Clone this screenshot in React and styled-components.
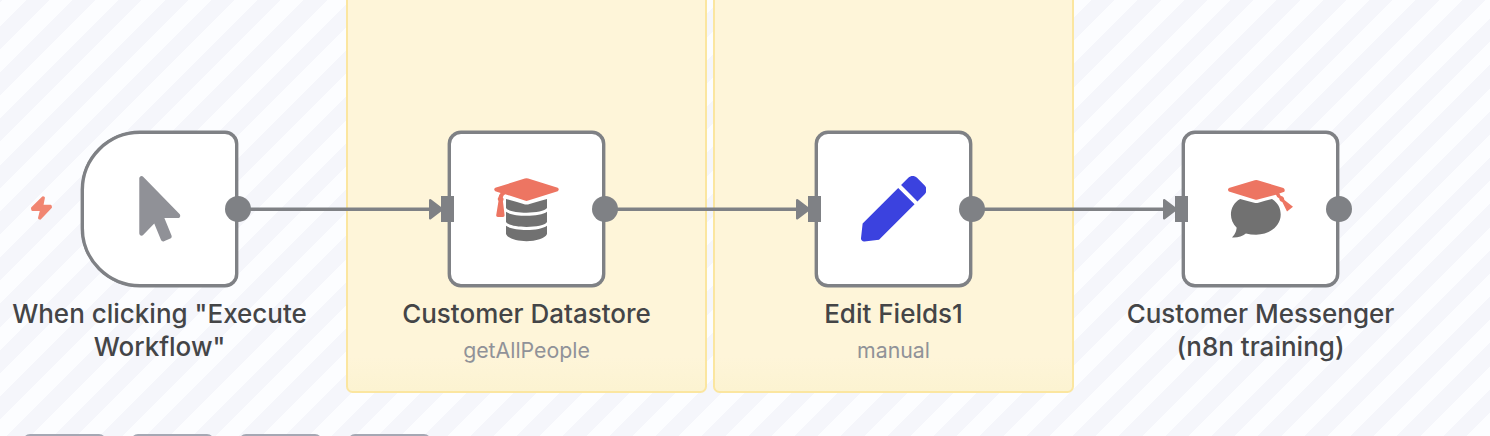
import React from "react";
import styled, { createGlobalStyle, css } from "styled-components";
import { FaPen, FaMousePointer } from "react-icons/fa";

const GlobalStyle = createGlobalStyle`
  body { margin: 0; overflow: hidden; }
`;

const ink = "#7f8185";

const Page = styled.main`
  display: flex;
  flex-direction: column;
  width: 1490px;
  height: 436px;
  overflow: hidden;
  font-family: Inter, "Liberation Sans", sans-serif;
  -webkit-font-smoothing: antialiased;
  background: repeating-linear-gradient(
    135deg,
    #f5f6fb 0,
    #f5f6fb 2.02px,
    #fcfdff 2.02px,
    #fcfdff 18.4px,
    #f5f6fb 18.4px,
    #f5f6fb 32.76px
  );
`;

const Canvas = styled.div`
  position: relative;
  flex: 0 0 434px;
`;

const Sticky = styled.section`
  position: absolute;
  box-sizing: border-box;
  left: ${(p) => p.$x}px;
  top: -20px;
  width: 361px;
  height: 412.7px;
  border: 2px solid #fbe6a0;
  border-radius: 6.5px;
  background: linear-gradient(to top, #fcf3d1 0, #fef5d9 34px);
`;

const Edge = styled.svg`
  position: absolute;
  left: ${(p) => p.$x}px;
  top: 196px;
  width: 196px;
  height: 26px;
`;

const Node = styled.article`
  position: absolute;
  left: ${(p) => p.$x}px;
  top: 131px;
  width: 157px;
  display: flex;
  flex-direction: column;
  align-items: center;
`;

const Tile = styled.div`
  position: relative;
  box-sizing: border-box;
  width: 157px;
  height: 156px;
  display: flex;
  align-items: center;
  justify-content: center;
  border: 3px solid ${ink};
  border-radius: ${(p) => (p.$trigger ? "59px 13px 13px 59px" : "13px")};
  box-shadow: 0 0 0 0.4px ${ink};
  background: #fff;
`;

const handle = css`
  position: absolute;
  top: 62px;
  height: 26px;
  background: ${ink};
`;

const Output = styled.span`
  ${handle}
  right: -16px;
  width: 26px;
  border-radius: 50%;
`;

const Input = styled.span`
  ${handle}
  left: -10px;
  width: 13px;
`;

const Title = styled.h2`
  margin: 10px 0 0;
  font-size: 26px;
  line-height: 33px;
  font-weight: 500;
  color: #444547;
  text-align: center;
  white-space: pre;
`;

const Subtitle = styled.p`
  margin: 6px 0 0;
  font-size: 21.3px;
  line-height: 28px;
  color: #909298;
  white-space: pre;
`;

const Bolt = styled.svg`
  position: absolute;
  left: 30px;
  top: 195px;
  width: 23px;
  height: 26px;
`;

const Glyph = styled.svg`
  width: 77px;
  height: 74px;
`;

const Controls = styled.nav`
  display: flex;
  gap: 25.2px;
  padding-left: 23px;
`;

const ControlButton = styled.button`
  box-sizing: border-box;
  flex: none;
  width: 83px;
  height: 83px;
  padding: 0;
  border: 3px solid #a5a8b4;
  border-radius: 7px;
  background: #fff;
`;

const DatastoreIcon = () => (
  <Glyph viewBox="0 0 77 74">
    <path
      fill="#ed7562"
      d="M36.8 6.6Q38.5 5.8 40.2 6.6L69.7 15.8Q71.8 17.5 69.7 19.2L40.2 28.6Q38.5 29.3 36.8 28.6L17.2 22.2Q15.2 23.3 14.8 25.5Q16.3 27 14.9 29L16.6 43.3Q16.6 45 15 45H9.8Q8 45 8.2 43.3L10.5 29Q9 27 10.5 25.3Q10.8 22.7 12.6 20.9L7.3 19.2Q5.1 17.5 7.3 15.8Z"
    />
    <path
      fill="#717171"
      d="M18 27Q27 29.5 35.5 31.9Q38.5 33.2 41.5 31.9Q50 29.5 59 27V36C55 42.2 22 42.2 18 36ZM18 39.7C25 45.2 52 45.2 59 39.7V50C55 56.5 22 56.5 18 50ZM18 53.8C25 59.5 52 59.5 59 53.8V62C55 71.5 22 71.5 18 62Z"
    />
  </Glyph>
);

const MessengerIcon = () => (
  <Glyph viewBox="0 0 77 74">
    <path
      fill="#ed7562"
      d="M32.7 8.2Q34.2 7.6 35.7 8.2L61.4 16Q63.5 17.5 62.3 19.7L57.3 21.6Q58.3 24.3 60.2 24.3Q62.4 25.3 62.4 28L71 34.7L65 39.5L60.3 30Q57.3 29.2 57.3 26.4Q54.7 25.3 54 22.7L35.7 27.4Q34.2 28 32.7 27.4L6.9 19.5Q5 17.8 6.9 16Z"
    />
    <path
      fill="#717171"
      d="M18.2 27Q26 29.2 32.2 30.7Q34.2 31.5 36.4 30.7Q43 28.9 50 27C56 31 58.7 36 58.7 42.5C58.7 54.5 47 62.7 34.2 62.7Q28.7 62.7 23.9 61.5Q18.2 66.1 10 65.5Q14 61.5 14.7 55.7C6 47.5 7.1 33 18.2 27Z"
    />
  </Glyph>
);

const nodes = [
  { x: 81, title: 'When clicking "Execute\nWorkflow"', trigger: true, icon: <FaMousePointer size={65.5} color="#909197" /> },
  { x: 448, title: "Customer Datastore", subtitle: "getAllPeople", icon: <DatastoreIcon /> },
  { x: 815, title: "Edit Fields1", subtitle: "manual", icon: <FaPen size={65.5} color="#3b42df" /> },
  { x: 1182, title: "Customer Messenger\n(n8n training)", icon: <MessengerIcon /> },
];

export default function App() {
  return (
    <Page>
      <GlobalStyle />
      <Canvas>
        <Sticky $x={346} />
        <Sticky $x={713} />
        {[248, 615, 982].map((x) => (
          <Edge key={x} $x={x} viewBox="0 0 196 26">
            <path d="M0 13.2H185" stroke={ink} strokeWidth="3.4" />
            <path d="M182.2 4.2L194 13.2L182.2 22.3Z" fill={ink} stroke={ink} strokeWidth="2.4" strokeLinejoin="round" />
          </Edge>
        ))}
        <Bolt viewBox="0 0 23 26">
          <path
            d="M13.1 2.4L2.2 13.2L2.5 14.9H11.3L9.2 23.1L10.1 23.5L20.8 12.2L20.5 10.9H12.1L13.7 2.8Z"
            fill="#f18672"
            stroke="#f18672"
            strokeWidth="2.4"
            strokeLinejoin="round"
          />
        </Bolt>
        {nodes.map((n) => (
          <Node key={n.x} $x={n.x}>
            <Tile $trigger={n.trigger}>
              {n.icon}
              {!n.trigger && <Input />}
              <Output />
            </Tile>
            <Title>{n.title}</Title>
            {n.subtitle && <Subtitle>{n.subtitle}</Subtitle>}
          </Node>
        ))}
      </Canvas>
      <Controls>
        {["fit", "in", "out", "tidy"].map((id) => (
          <ControlButton key={id} />
        ))}
      </Controls>
    </Page>
  );
}
